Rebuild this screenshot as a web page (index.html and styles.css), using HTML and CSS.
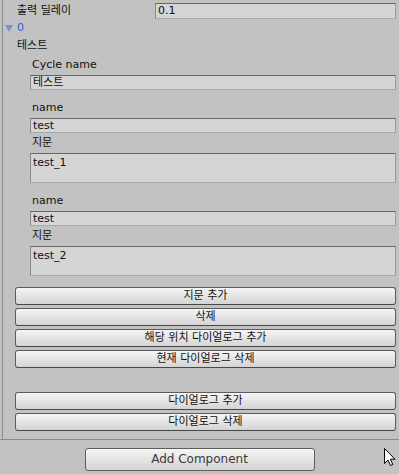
FILE: index.html
```html
<!DOCTYPE html>
<html>
<head>
<meta charset="utf-8">
<link rel="stylesheet" href="styles.css">
</head>
<body>
<div class="inspector">
  <div class="panel">
    <div class="prop-row">
      <span class="prop-label">출력 딜레이</span>
      <div class="field">0.1</div>
    </div>
    <div class="foldout">
      <svg class="fold-arrow" width="8" height="7" viewBox="0 0 8 7"><polygon points="0,0 8,0 4,7" fill="#7b90d2"/></svg>
      <span class="fold-text">0</span>
    </div>
    <div class="title-row">테스트</div>
    <div class="group">
      <div class="label first">Cycle name</div>
      <div class="field">테스트</div>

      <div class="label gap">name</div>
      <div class="field">test</div>
      <div class="label">지문</div>
      <div class="field area">test_1</div>

      <div class="label gap">name</div>
      <div class="field">test</div>
      <div class="label">지문</div>
      <div class="field area">test_2</div>
    </div>
    <div class="buttons">
      <div class="btn">지문 추가</div>
      <div class="btn">삭제</div>
      <div class="btn">해당 위치 다이얼로그 추가</div>
      <div class="btn">현재 다이얼로그 삭제</div>
    </div>
    <div class="buttons lower">
      <div class="btn">다이얼로그 추가</div>
      <div class="btn">다이얼로그 삭제</div>
    </div>
  </div>
</div>
<div class="footer">
  <div class="add-btn">Add Component</div>
</div>
<svg class="cursor" width="13" height="20" viewBox="0 0 13 20">
  <path d="M1.5 1.5 L1.5 16.5 L5 13 L7.5 18.5 L9.8 17.5 L7.4 12.2 L12 12.2 Z" fill="#fff" stroke="#000" stroke-width="1" stroke-linejoin="miter"/>
</svg>
</body>
</html>
```

FILE: styles.css
```css
html, body {
  margin: 0;
  padding: 0;
}
body {
  width: 399px;
  height: 474px;
  overflow: hidden;
  position: relative;
  background: #c2c2c2;
  font-family: "DejaVu Sans", "Noto Sans CJK KR", sans-serif;
  font-size: 11px;
  color: #111;
}
.inspector {
  border-bottom: 1px solid #8a8a8a;
}
.panel {
  margin-left: 2px;
  border-left: 1px solid #8c8c8c;
  padding: 3px 3px 8px 0;
}
.prop-row {
  display: flex;
  align-items: center;
  height: 16px;
  padding-left: 14px;
}
.prop-label {
  width: 138px;
  flex: none;
  line-height: 16px;
}
.prop-row .field {
  flex: 1;
}
.field {
  box-sizing: border-box;
  height: 15px;
  line-height: 13px;
  padding-left: 2px;
  background: #d5d5d5;
  border-top: 1px solid #666;
  border-left: 1px solid #888;
  border-right: 1px solid #9a9a9a;
  border-bottom: 1px solid #a9a9a9;
  color: #111;
  white-space: nowrap;
}
.prop-row .field {
  height: 16px;
  line-height: 14px;
}
.field.area {
  height: 30px;
  line-height: 14px;
  padding-top: 2px;
}
.foldout {
  display: flex;
  align-items: center;
  margin-top: 2px;
  height: 14px;
  padding-left: 2px;
}
.fold-arrow {
  display: block;
  margin-top: 1px;
}
.fold-text {
  margin-left: 4px;
  color: #2a5fdc;
  line-height: 14px;
}
.title-row {
  margin-top: 4px;
  height: 14px;
  line-height: 14px;
  padding-left: 14px;
}
.group {
  padding-left: 27px;
}
.label {
  margin-top: 3px;
  height: 14px;
  line-height: 14px;
  padding-left: 2px;
}
.label.first {
  margin-top: 5px;
}
.label.gap {
  margin-top: 11px;
}
.group .field {
  margin-top: 3px;
}
.buttons {
  margin-top: 11px;
  padding-left: 12px;
  display: flex;
  flex-direction: column;
  gap: 3px;
}
.buttons.lower {
  margin-top: 24px;
}
.btn, .add-btn {
  box-sizing: border-box;
  height: 18px;
  line-height: 16px;
  text-align: center;
  border: 1px solid #5c5c5c;
  border-bottom-color: #484848;
  border-radius: 3px;
  background: linear-gradient(#f5f5f5, #d4d4d4);
  color: #111;
}
.footer {
  display: flex;
  justify-content: center;
  padding-top: 8px;
}
.add-btn {
  width: 230px;
  height: 23px;
  line-height: 21px;
  font-size: 12px;
  color: #3a3a3a;
  border-color: #5e5e5e;
}
.cursor {
  position: absolute;
  left: 383px;
  top: 447px;
}
```
